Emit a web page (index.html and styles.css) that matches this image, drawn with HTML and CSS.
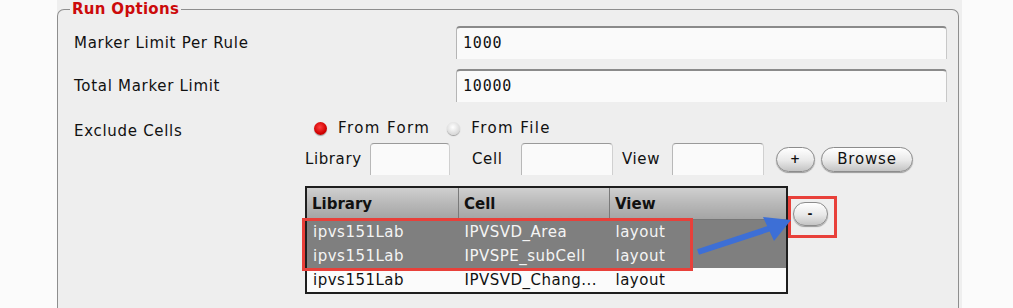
FILE: index.html
```html
<!DOCTYPE html>
<html lang="en">
<head>
  <meta charset="UTF-8" />
  <title>Run Options</title>
  <link rel="stylesheet" href="styles.css">
</head>
<body>
  <div class="page">
    <div class="panel">
      <fieldset class="opts">
        <legend>Run Options</legend>

        <div class="row">
          <label class="lbl">Marker Limit Per Rule</label>
          <div class="field">1000</div>
        </div>
        <div class="row">
          <label class="lbl">Total Marker Limit</label>
          <div class="field">10000</div>
        </div>

        <div class="exclude">
          <label class="lbl exlbl">Exclude Cells</label>
          <div class="excontent">
            <div class="radios">
              <span class="radio on"></span><span class="rtext">From Form</span>
              <span class="radio"></span><span class="rtext">From File</span>
            </div>
            <div class="adder">
              <span class="atext w-lib">Library</span><span class="box lib"></span>
              <span class="atext w-cell">Cell</span><span class="box"></span>
              <span class="atext w-view">View</span><span class="box"></span>
              <button class="btn plus">+</button>
              <button class="btn browse">Browse</button>
            </div>
            <div class="tablewrap">
              <table class="cells">
                <thead>
                  <tr><th class="c1">Library</th><th class="c2">Cell</th><th class="c3">View</th></tr>
                </thead>
                <tbody>
                  <tr class="sel"><td>ipvs151Lab</td><td>IPVSVD_Area</td><td>layout</td></tr>
                  <tr class="sel"><td>ipvs151Lab</td><td>IPVSPE_subCell</td><td>layout</td></tr>
                  <tr><td>ipvs151Lab</td><td>IPVSVD_Chang...</td><td>layout</td></tr>
                </tbody>
              </table>
              <button class="btn minus">-</button>
            </div>
          </div>
        </div>
      </fieldset>
    </div>

    <!-- annotations -->
    <div class="mark rows-mark"></div>
    <div class="mark btn-mark"></div>
    <svg class="arrow" width="110" height="50" viewBox="0 0 110 50">
      <line x1="3" y1="44" x2="76" y2="20" stroke="#3d6fd6" stroke-width="6" />
      <polygon points="96,12 68,9 79,33" fill="#3d6fd6" />
    </svg>
  </div>
</body>
</html>
```

FILE: styles.css
```css
body {
  margin: 0;
  background: #fbfbfb;
  font-family: "DejaVu Sans", sans-serif;
  font-size: 15px;
  color: #111;
}
.page {
  position: relative;
  width: 1013px;
  height: 308px;
  overflow: hidden;
}
.panel {
  margin-left: 57px;
  width: 905px;
  height: 308px;
  background: #efefef;
}
.opts {
  margin: 0;
  width: 902px;
  height: 330px;
  box-sizing: border-box;
  padding: 8px 11px 0 16px;
  border: 1px solid #8e8e8e;
  border-bottom: none;
  border-radius: 7px 7px 0 0;
  background: #eeeeee;
}
.opts legend {
  color: #cc0a0a;
  font-weight: bold;
  font-size: 15px;
  padding: 0 2px;
  margin-left: -4px;
  letter-spacing: 0.3px;
}
.row {
  display: grid;
  grid-template-columns: 382px 1fr;
  align-items: center;
  margin-bottom: 10px;
}
.lbl {
  letter-spacing: 0.7px;
}
.field {
  height: 33px;
  box-sizing: border-box;
  background: #fafafa;
  border-top: 2px solid #8a8a8a;
  border-left: 1px solid #b5b5b5;
  border-right: 1px solid #c8c8c8;
  border-radius: 4px 4px 0 0;
  padding: 6px 0 0 6px;
  font-family: "DejaVu Sans Mono", monospace;
  font-size: 15px;
  letter-spacing: 0.8px;
}
.exclude {
  display: flex;
  padding-top: 5px;
}
.exlbl {
  width: 231px;
  flex: none;
  padding-top: 5px;
}
.excontent {
  display: flex;
  flex-direction: column;
}
.radios {
  display: flex;
  align-items: center;
  height: 22px;
  margin-left: 9px;
}
.radio {
  width: 13px;
  height: 13px;
  border-radius: 50%;
  background: radial-gradient(circle at 45% 40%, #ffffff, #d8d8d8 70%, #b0b0b0);
  box-shadow: 0 1px 1px #999;
  margin-right: 11px;
}
.radio.on {
  background: radial-gradient(circle at 45% 40%, #ff4040, #d00000 60%, #a00000);
}
.rtext {
  margin-right: 17px;
  letter-spacing: 1.4px;
}
.adder {
  display: flex;
  align-items: center;
  margin-top: 4px;
  height: 32px;
  letter-spacing: 0.6px;
}
.atext {
  flex: none;
}
.w-lib { width: 65px; }
.w-cell { width: 49px; }
.w-view { width: 50px; }
.box {
  width: 92px;
  height: 32px;
  box-sizing: border-box;
  background: #fafafa;
  border-top: 1px solid #9a9a9a;
  border-left: 1px solid #b8b8b8;
  border-right: 1px solid #d0d0d0;
  border-radius: 4px 4px 0 0;
  margin-right: 9px;
}
.box.lib {
  width: 80px;
  margin-right: 22px;
}
.btn {
  font-family: "DejaVu Sans", sans-serif;
  font-size: 15px;
  color: #111;
  height: 25px;
  border: 1px solid #8c8c8c;
  border-radius: 13px;
  background: linear-gradient(#ffffff, #e8e8e8 55%, #c4c4c4);
  box-shadow: 0 1px 1px #9a9a9a;
  padding: 0;
  letter-spacing: 0.8px;
}
.plus {
  width: 39px;
  margin-left: 3px;
  font-weight: bold;
  font-size: 12px;
}
.browse {
  width: 92px;
  margin-left: 6px;
}
.tablewrap {
  display: flex;
  align-items: flex-start;
  margin-top: 11px;
}
.cells {
  border-collapse: collapse;
  border: 2px solid #1e1e1e;
  background: #fbfbfb;
  width: 483px;
}
.cells th {
  height: 31px;
  padding: 0 5px;
  text-align: left;
  font-weight: bold;
  background: linear-gradient(#cfcfcf, #b8b8b8 50%, #a4a4a4);
  border-left: 1px solid #7a7a7a;
  border-bottom: 1px solid #777;
}
.cells th.c1 { width: 141px; border-left: none; }
.cells th.c2 { width: 140px; }
.cells td {
  height: 24px;
  padding: 0 6px;
  letter-spacing: 0.5px;
  white-space: nowrap;
}
.cells tr.sel td {
  background: #7f7f7f;
  color: #f4f4f4;
}
.minus {
  width: 35px;
  height: 24px;
  margin: 16px 0 0 5px;
  font-size: 12px;
  font-weight: bold;
}
.mark {
  position: absolute;
  border: 3px solid #e8403a;
  box-sizing: border-box;
}
.rows-mark {
  left: 302px;
  top: 218px;
  width: 391px;
  height: 53px;
}
.btn-mark {
  left: 788px;
  top: 196px;
  width: 49px;
  height: 42px;
}
.arrow {
  position: absolute;
  left: 695px;
  top: 208px;
}
```
